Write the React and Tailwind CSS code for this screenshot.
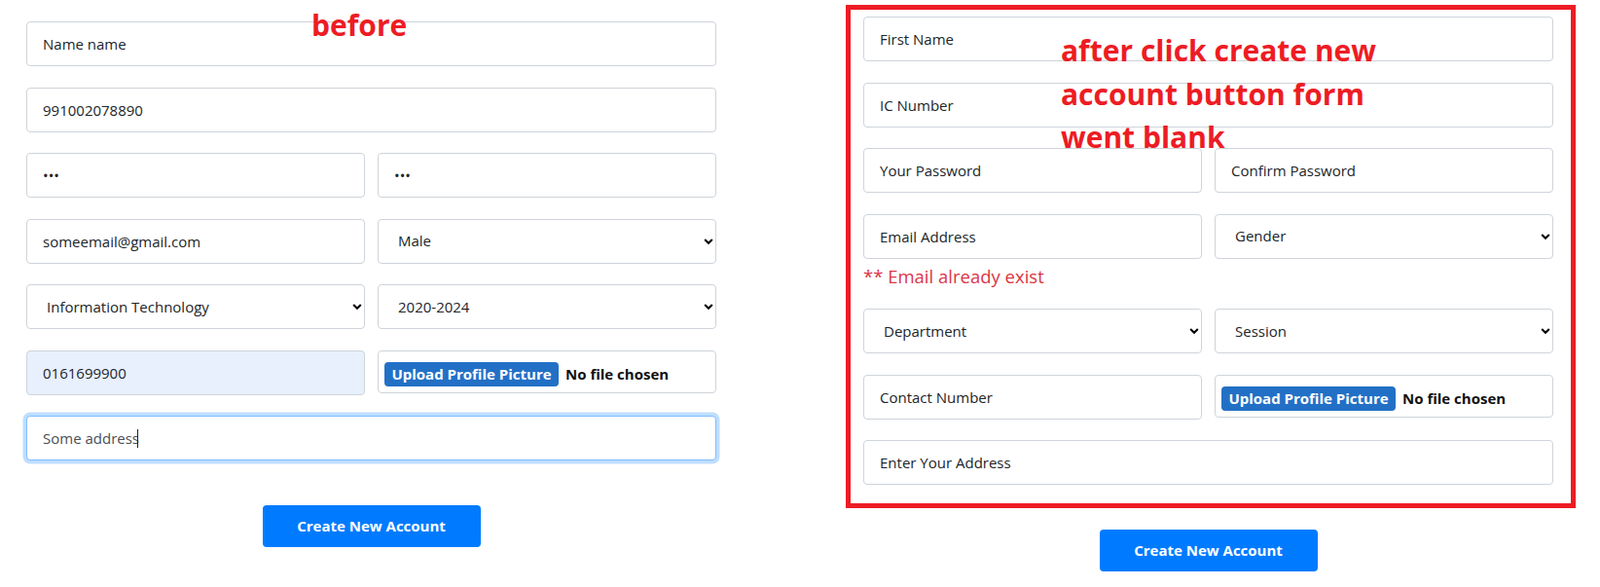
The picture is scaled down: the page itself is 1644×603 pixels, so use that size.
import React from "react";

const inputCls =
  "block h-[46px] w-full rounded-[4px] border border-[#ced4da] bg-white pl-4 pr-3 text-[15px] text-[#212529] placeholder:text-[#212529] outline-none";

function Chevron() {
  return (
    <svg
      className="pointer-events-none absolute right-[3px] top-1/2 -translate-y-1/2"
      width="10"
      height="7"
      viewBox="0 0 10 7"
    >
      <path d="M1.2 1.5L5 5.2L8.8 1.5" fill="none" stroke="#000" strokeWidth="2.1" />
    </svg>
  );
}

function Select({ value, options }) {
  return (
    <div className="relative h-[46px] w-full">
      <select
        defaultValue={value}
        className="block h-[46px] w-full appearance-none rounded-[4px] border border-[#ced4da] bg-white pl-[20px] pr-6 text-[15px] text-[#212529] outline-none"
      >
        {options.map((o) => (
          <option key={o}>{o}</option>
        ))}
      </select>
      <Chevron />
    </div>
  );
}

function FileField() {
  return (
    <div className="flex h-[44px] w-full items-start gap-[7px] rounded-[4px] border border-[#ced4da] bg-white pl-[6px] pt-[11px]">
      <span className="flex h-[25px] w-[179px] items-center justify-center rounded-[4px] bg-[#2270c6] text-[15px] font-bold text-white">
        Upload Profile Picture
      </span>
      <span className="leading-[25px] text-[15px] font-bold text-[#111]">No file chosen</span>
    </div>
  );
}

function CreateButton({ className }) {
  return (
    <button
      type="button"
      className={
        "mx-auto block h-[43px] w-[224px] rounded-[4px] bg-[#007bff] text-[15px] font-bold text-white " +
        className
      }
    >
      Create New Account
    </button>
  );
}

export default function App() {
  return (
    <div className="relative min-h-[603px] bg-white font-['Open_Sans',sans-serif]">
      <div className="flex items-start">
        {/* BEFORE */}
        <div className="ml-[27px] mt-[22px] flex w-[709px] flex-col">
          <form className="flex flex-col gap-[21.5px]">
            <input className={inputCls} defaultValue="Name name" />
            <input className={inputCls} defaultValue="991002078890" />
            <div className="grid grid-cols-2 gap-x-[13px]">
              <input type="password" className={inputCls} defaultValue="abc" />
              <input type="password" className={inputCls} defaultValue="abc" />
            </div>
            <div className="grid grid-cols-2 gap-x-[13px]">
              <input className={inputCls} defaultValue="someemail@gmail.com" />
              <Select value="Male" options={["Gender", "Male", "Female"]} />
            </div>
            <div className="grid grid-cols-2 gap-x-[13px]">
              <Select
                value="Information Technology"
                options={["Department", "Information Technology"]}
              />
              <Select value="2020-2024" options={["Session", "2020-2024"]} />
            </div>
            <div className="grid grid-cols-2 items-start gap-x-[13px]">
              <input
                className="block h-[46px] w-full rounded-[4px] border border-[#ced4da] bg-[#e8f0fe] pl-4 pr-3 text-[15px] text-[#212529] outline-none"
                defaultValue="0161699900"
              />
              <FileField />
            </div>
            <div className="flex h-[46px] w-full items-center rounded-[4px] border border-[#80bdff] bg-white pl-4 text-[15px] text-[#495057] shadow-[0_0_0_3.5px_rgba(0,123,255,0.25)]">
              <span>Some address</span>
              <span className="-ml-[2px] h-[19px] w-px bg-[#222]" />
            </div>
          </form>
          <CreateButton className="mt-[46px]" />
        </div>

        {/* AFTER */}
        <div className="ml-[151px] mt-[5px] flex w-[709px] flex-col">
          <div className="-ml-[18px] -mr-[23px] border-[5px] border-[#ed1c24] pb-[19px] pl-[13px] pr-[18px] pt-[7px]">
            <form className="flex flex-col gap-[21.5px]">
              <input className={inputCls} placeholder="First Name" />
              <input className={inputCls} placeholder="IC Number" />
              <div className="grid grid-cols-2 gap-x-[13px]">
                <input className={inputCls} placeholder="Your Password" />
                <input className={inputCls} placeholder="Confirm Password" />
              </div>
              <div className="grid grid-cols-2 items-start gap-x-[13px]">
                <div>
                  <input className={inputCls} placeholder="Email Address" />
                  <p className="mt-[5px] text-[18.5px] leading-[25px] text-[#dc3545]">
                    ** Email already exist
                  </p>
                </div>
                <Select value="Gender" options={["Gender", "Male", "Female"]} />
              </div>
              <div className="grid grid-cols-2 gap-x-[13px]">
                <Select value="Department" options={["Department", "Information Technology"]} />
                <Select value="Session" options={["Session", "2020-2024"]} />
              </div>
              <div className="grid grid-cols-2 items-start gap-x-[13px]">
                <input className={inputCls} placeholder="Contact Number" />
                <FileField />
              </div>
              <input className={inputCls} placeholder="Enter Your Address" />
            </form>
          </div>
          <CreateButton className="mt-[22px]" />
        </div>
      </div>

      {/* annotations */}
      <p className="absolute left-[320px] top-[11px] text-[30px] font-bold leading-[30px] text-[#ed1c24]">
        before
      </p>
      <p className="absolute left-[1090px] top-[30px] whitespace-nowrap text-[30px] font-bold leading-[44.5px] text-[#ed1c24]">
        after click create new
        <br />
        account button form
        <br />
        went blank
      </p>
    </div>
  );
}
